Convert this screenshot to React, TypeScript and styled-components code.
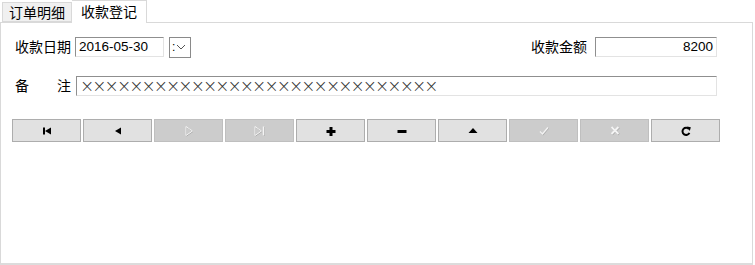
import styled, { createGlobalStyle } from 'styled-components';

import type { FC, ReactNode } from 'react';

const GlobalStyle = createGlobalStyle`
  html, body {
    margin: 0;
    padding: 0;
    background: #ffffff;
  }
  body {
    font-family: "Noto Sans CJK SC", "Liberation Sans", sans-serif;
    color: #000;
  }
`;

const Wrapper = styled.div`
  width: 755px;
  height: 265px;
  display: flex;
  flex-direction: column;
  background: #ffffff;
  box-sizing: border-box;
  padding-right: 2px;
`;

const TabBar = styled.div`
  display: flex;
  align-items: flex-end;
  height: 22px;
  padding-left: 2px;
  position: relative;
  z-index: 1;
`;

const Tab = styled.div<{ $active?: boolean }>`
  box-sizing: border-box;
  height: ${p => (p.$active ? '23px' : '20px')};
  padding: 0 ${p => (p.$active ? '9px' : '6px')};
  margin-bottom: ${p => (p.$active ? '-1px' : '0')};
  border: 1px solid #d9d9d9;
  border-bottom: ${p => (p.$active ? 'none' : '1px solid #d9d9d9')};
  border-left: ${p => (p.$active ? 'none' : '1px solid #d9d9d9')};
  background: ${p => (p.$active ? '#ffffff' : '#f0f0f0')};
  font-size: 14px;
  line-height: ${p => (p.$active ? '21px' : '18px')};
  white-space: nowrap;
`;

const Panel = styled.div`
  flex: 1;
  box-sizing: border-box;
  border: 1px solid #d9d9d9;
  border-bottom: 2px solid #dcdcdc;
  display: flex;
  flex-direction: column;
  padding: 14px 0 0 11px;
`;

const FieldRow = styled.div`
  display: flex;
  align-items: center;
  height: 20px;
  width: 705px;
  padding-left: 3px;
  box-sizing: border-box;
  & + & {
    margin-top: 19px;
  }
`;

const Group = styled.div<{ $push?: boolean }>`
  display: flex;
  align-items: center;
  margin-left: ${p => (p.$push ? 'auto' : '0')};
`;

const Label = styled.span<{ $spread?: boolean; $gap?: number }>`
  display: flex;
  justify-content: ${p => (p.$spread ? 'space-between' : 'flex-start')};
  width: ${p => (p.$spread ? '56px' : 'auto')};
  font-size: 14px;
  line-height: 20px;
  margin-right: ${p => p.$gap ?? 4}px;
  white-space: nowrap;
  margin-top: -2px;
`;

const Input = styled.div<{ $w: number; $right?: boolean }>`
  box-sizing: border-box;
  width: ${p => p.$w}px;
  height: 20px;
  border-top: 1px solid #8f8f8f;
  border-left: 1px solid #8f8f8f;
  border-right: 1px solid #e3e3e3;
  border-bottom: 1px solid #e3e3e3;
  background: #fff;
  font-family: "Liberation Sans", Arial, sans-serif;
  font-size: 13.5px;
  line-height: 18px;
  padding: 0 3px;
  text-align: ${p => (p.$right ? 'right' : 'left')};
  white-space: nowrap;
  overflow: hidden;
`;

const Crosses = styled.span`
  font-family: "DejaVu Sans", sans-serif;
  font-weight: 200;
  font-size: 17px;
  line-height: 18px;
  letter-spacing: -1.95px;
  color: #333;
`;

const DropButton = styled.div`
  box-sizing: border-box;
  width: 22px;
  height: 21px;
  margin-left: 5px;
  border: 1px solid #8a8a8a;
  background: #fff;
  display: flex;
  align-items: center;
  padding-left: 2px;
  gap: 1px;
  font-family: "Liberation Sans", sans-serif;
  font-size: 12px;
`;

const ButtonBar = styled.div`
  display: flex;
  gap: 2px;
  margin-top: 23px;
`;

const NavButton = styled.div<{ $disabled?: boolean }>`
  box-sizing: border-box;
  width: 69px;
  height: 23px;
  border: 1px solid ${p => (p.$disabled ? '#bfbfbf' : '#adadad')};
  background: ${p => (p.$disabled ? '#cccccc' : '#e1e1e1')};
  display: flex;
  align-items: center;
  justify-content: center;
`;

const Icon: FC<{ children: ReactNode }> = ({ children }) => (
  <svg width="14" height="12" viewBox="0 0 14 12">
    {children}
  </svg>
);

const shade = '#a8a8a8';
const light = '#f4f4f4';

const buttons: { key: string; disabled?: boolean; icon: ReactNode }[] = [
  {
    key: 'first',
    icon: (
      <Icon>
        <rect x="3" y="2.5" width="2" height="7" fill="#000" />
        <polygon points="5,6 11,2.5 11,9.5" fill="#000" />
      </Icon>
    ),
  },
  {
    key: 'prev',
    icon: (
      <Icon>
        <polygon points="4,6 10,2.5 10,9.5" fill="#000" />
      </Icon>
    ),
  },
  {
    key: 'next',
    disabled: true,
    icon: (
      <Icon>
        <polygon points="4.5,2 11,6.5 4.5,11" fill="none" stroke={shade} strokeWidth="1" />
        <polygon points="4,1.5 10.5,6 4,10.5" fill="none" stroke={light} strokeWidth="1" />
      </Icon>
    ),
  },
  {
    key: 'last',
    disabled: true,
    icon: (
      <Icon>
        <polygon points="2.5,2 9,6.5 2.5,11" fill="none" stroke={shade} strokeWidth="1" />
        <line x1="11" y1="2" x2="11" y2="11" stroke={shade} strokeWidth="1.4" />
        <polygon points="2,1.5 8.5,6 2,10.5" fill="none" stroke={light} strokeWidth="1" />
        <line x1="10.5" y1="1.5" x2="10.5" y2="10.5" stroke={light} strokeWidth="1.4" />
      </Icon>
    ),
  },
  {
    key: 'add',
    icon: (
      <Icon>
        <rect x="5.5" y="2" width="3" height="9" fill="#000" />
        <rect x="2.5" y="5" width="9" height="3" fill="#000" />
      </Icon>
    ),
  },
  {
    key: 'remove',
    icon: (
      <Icon>
        <rect x="2.5" y="5" width="9" height="3" fill="#000" />
      </Icon>
    ),
  },
  {
    key: 'edit',
    icon: (
      <Icon>
        <polygon points="7,3 11.5,8 2.5,8" fill="#000" />
      </Icon>
    ),
  },
  {
    key: 'post',
    disabled: true,
    icon: (
      <Icon>
        <polyline points="3.5,7 6,9.5 11.5,3" fill="none" stroke={shade} strokeWidth="1.4" />
        <polyline points="3,6.5 5.5,9 11,2.5" fill="none" stroke={light} strokeWidth="1.4" />
      </Icon>
    ),
  },
  {
    key: 'cancel',
    disabled: true,
    icon: (
      <Icon>
        <path d="M4 2.5 L11 9.5 M11 2.5 L4 9.5" stroke={shade} strokeWidth="2.2" />
        <path d="M3.5 2 L10.5 9 M10.5 2 L3.5 9" stroke={light} strokeWidth="2" />
      </Icon>
    ),
  },
  {
    key: 'refresh',
    icon: (
      <Icon>
        <path d="M10 4.2 A3.6 3.6 0 1 0 10.4 7.8" fill="none" stroke="#000" strokeWidth="2" />
        <polygon points="8,1.5 11.8,2.2 10.8,6" fill="#000" />
      </Icon>
    ),
  },
];

const App: FC = () => {
  return (
    <Wrapper>
      <GlobalStyle />
      <TabBar>
        <Tab>订单明细</Tab>
        <Tab $active>收款登记</Tab>
      </TabBar>
      <Panel>
        <FieldRow>
          <Group>
            <Label>收款日期</Label>
            <Input $w={89}>2016-05-30</Input>
            <DropButton>
              <span>:</span>
              <svg width="10" height="6" viewBox="0 0 10 6">
                <polyline points="1,1 5,5 9,1" fill="none" stroke="#555" strokeWidth="1" />
              </svg>
            </DropButton>
          </Group>
          <Group $push>
            <Label $gap={8}>收款金额</Label>
            <Input $w={122} $right>8200</Input>
          </Group>
        </FieldRow>
        <FieldRow>
          <Label $spread $gap={5}>
            <span>备</span>
            <span>注</span>
          </Label>
          <Input $w={641}>
            <Crosses>{'×'.repeat(29)}</Crosses>
          </Input>
        </FieldRow>
        <ButtonBar>
          {buttons.map(b => (
            <NavButton key={b.key} $disabled={b.disabled}>
              {b.icon}
            </NavButton>
          ))}
        </ButtonBar>
      </Panel>
    </Wrapper>
  );
};

export default App;
